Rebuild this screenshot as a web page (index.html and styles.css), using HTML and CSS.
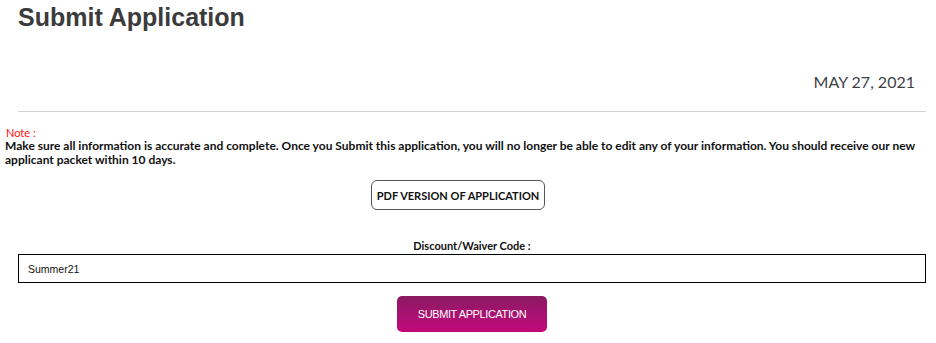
FILE: index.html
```html
<!DOCTYPE html>
<html lang="en">

<head>
    <meta charset="UTF-8">
    <meta name="viewport" content="width=device-width, initial-scale=1.0">
    <title>Submit Application</title>
    <link rel="stylesheet" href="styles.css">
</head>

<body>
    <h1 class="page-title">Submit Application</h1>

    <!-- Date header -->
    <div class="date-row">
        <span class="date">MAY 27, 2021</span>
    </div>
    <hr class="divider">

    <!-- Note -->
    <div class="note">
        <span class="note-label">Note :</span>
        <p class="note-text">Make sure all information is accurate and complete. Once you Submit this application, you will no longer be able to edit any of your information. You should receive our new applicant packet within 10 days.</p>
    </div>

    <div class="pdf-row">
        <button class="pdf-button">PDF VERSION OF APPLICATION</button>
    </div>

    <!-- Discount code -->
    <div class="code-block">
        <label class="code-label" for="code">Discount/Waiver Code :</label>
        <input class="code-input" id="code" type="text" value="Summer21">
    </div>

    <div class="submit-row">
        <button class="submit-button">SUBMIT APPLICATION</button>
    </div>
</body>

</html>
```

FILE: styles.css
```css
body {
    margin: 0;
    padding: 0 10px 0 5px;
    background-color: #fff;
    font-family: 'Lato', sans-serif;
    color: #111;
}

.page-title {
    margin: 0;
    padding: 2px 0 0 13px;
    font-family: 'Liberation Sans', Arial, sans-serif;
    font-size: 25px;
    line-height: 30px;
    font-weight: bold;
    color: #3b3b3b;
}

.date-row {
    display: flex;
    justify-content: flex-end;
    padding: 38px 11px 0 0;
}

.date {
    font-size: 16px;
    line-height: 24px;
    color: #3f3f46;
}

.divider {
    margin: 17px 0 0 13px;
    border: none;
    border-top: 1px solid #cfcfcf;
}

.note {
    padding-top: 14px;
}

.note-label {
    display: block;
    padding-left: 1px;
    font-size: 11px;
    line-height: 13px;
    color: #ff0d0d;
}

.note-text {
    margin: 0;
    font-size: 12px;
    line-height: 14px;
    font-weight: bold;
    color: #111;
}

.pdf-row {
    display: flex;
    justify-content: center;
    padding-top: 13px;
    padding-right: 15px;
}

.pdf-button {
    height: 30px;
    padding: 0 5px;
    font-family: 'Lato', sans-serif;
    font-size: 11px;
    font-weight: bold;
    color: #111;
    background-color: #fff;
    border: 1px solid #555;
    border-radius: 6px;
}

.code-block {
    display: flex;
    flex-direction: column;
    align-items: center;
    padding: 29px 0 0 13px;
}

.code-label {
    font-size: 11px;
    line-height: 13px;
    font-weight: bold;
    margin-bottom: 2px;
}

.code-input {
    box-sizing: border-box;
    width: 100%;
    height: 29px;
    padding: 0 9px;
    font-family: 'Liberation Sans', Arial, sans-serif;
    font-size: 10.5px;
    color: #111;
    border: 1px solid #000;
    border-radius: 0;
    outline: none;
}

.submit-row {
    display: flex;
    justify-content: center;
    padding: 13px 0 0 13px;
}

.submit-button {
    width: 150px;
    height: 36px;
    font-family: 'Liberation Sans', Arial, sans-serif;
    font-size: 11px;
    letter-spacing: -0.4px;
    color: #fff;
    background: linear-gradient(to bottom, #8a1b62, #c4087c);
    border: none;
    border-radius: 5px;
}
```
